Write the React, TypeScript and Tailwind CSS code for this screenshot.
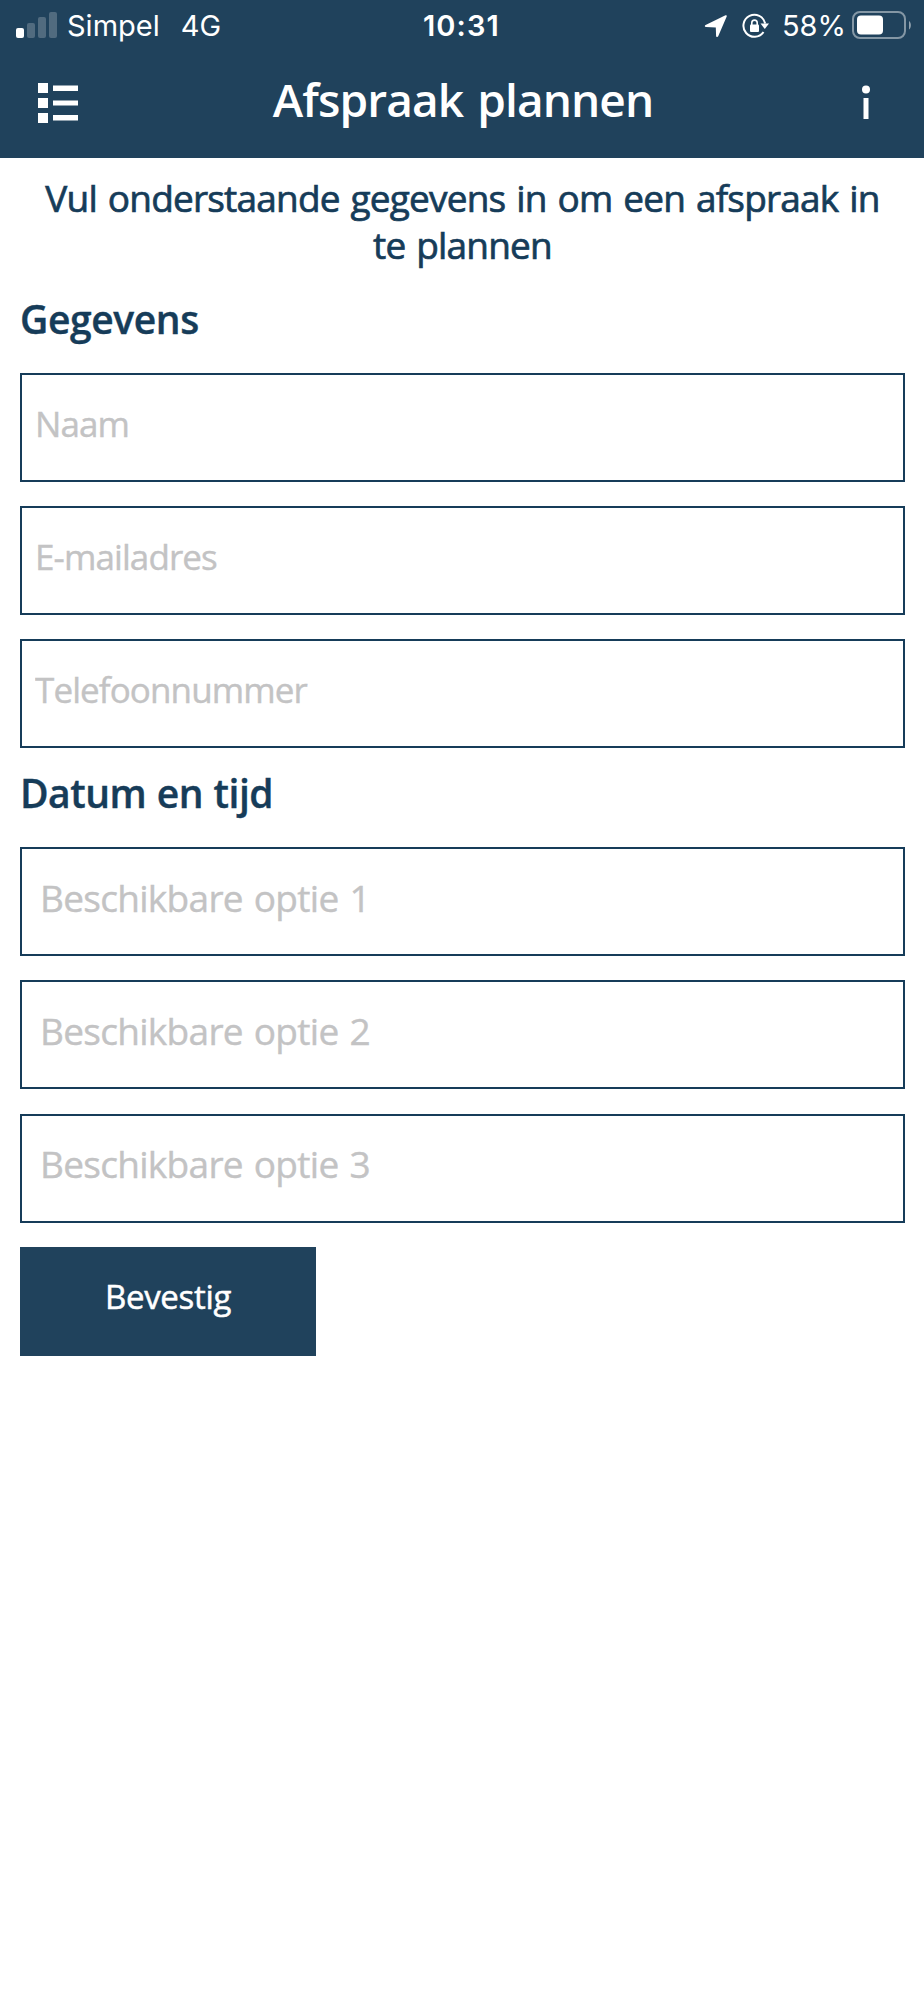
type FieldProps = {
    label: string;
    type: string;
};

type OptionProps = {
    label: string;
};

const StatusBar = () => {
    return (
        <div className="flex items-center h-[51px] pl-4 pr-[12px] font-['Inter',sans-serif] text-[29px] leading-[51px]">
            <div className="flex w-[407px] items-center">
                <svg width="42" height="28" viewBox="0 0 42 28" fill="white">
                    <rect x="0" y="16" width="8" height="10" rx="2" />
                    <rect x="11" y="11" width="8" height="15" rx="2" opacity="0.22" />
                    <rect x="22" y="5" width="8" height="21" rx="2" opacity="0.22" />
                    <rect x="33" y="0" width="8" height="26" rx="2" opacity="0.22" />
                </svg>
                <span className="ml-[9px]">Simpel</span>
                <span className="ml-[21px]">4G</span>
            </div>

            <span className="font-semibold tracking-[1.1px]">10:31</span>

            <div className="flex flex-1 items-center justify-end">
                <svg width="24" height="24" viewBox="0 0 24 24" fill="white">
                    <path d="M21.500 1.200c.9-.3 1.600.4 1.200 1.300L14.200 22.300c-.6 1.200-2 .9-2.100-.4l-.3-8.400-9.800-.4c-1.400-.1-1.600-1.500-.4-2z" />
                </svg>
                <svg className="ml-[14px]" width="28" height="26" viewBox="0 0 28 26" fill="none" stroke="white" strokeWidth="2">
                    <path d="M21.500 19A11 11 0 1 1 23.200 10.500" />
                    <path d="M18.500 10.500h8.500l-4.200 5.500z" fill="white" stroke="none" />
                    <rect x="8" y="11.500" width="9" height="7.500" rx="1" fill="white" stroke="none" />
                    <path d="M9.800 12V9.800a2.700 2.700 0 0 1 5.400 0V12" strokeWidth="1.600" />
                </svg>
                <span className="ml-3">58%</span>
                <svg className="ml-[6px]" width="60" height="30" viewBox="0 0 60 30" fill="none">
                    <rect x="1" y="1" width="52" height="26" rx="7" stroke="white" strokeOpacity="0.45" strokeWidth="2" />
                    <rect x="5" y="4.500" width="26" height="19" rx="4" fill="white" />
                    <path d="M57 10c2.500 1.500 2.500 7 0 8.500z" fill="white" fillOpacity="0.5" />
                </svg>
            </div>
        </div>
    );
};

const Header = () => {
    return (
        <header className="h-[158px] bg-[#20425c] text-white">
            <StatusBar />

            <div className="flex items-center justify-between h-[104px] pl-[38px] pr-[49px]">
                <svg width="40" height="41" viewBox="0 0 40 41" fill="white">
                    <path d="M0 0h10v10H0zM0 15h10v10H0zM0 30h10v10H0zM15 2.500h25v5.500H15zM15 17.500h25v5H15zM15 32h25v5.500H15z" />
                </svg>
                <h1 className="mr-[9px] pb-[9px] text-[46px] leading-[94px] font-semibold tracking-[-0.9px] [word-spacing:3px]">
                    Afspraak plannen
                </h1>
                <svg width="18" height="36" viewBox="0 0 18 36" fill="white">
                    <circle cx="9" cy="4.500" r="4" />
                    <rect x="6.500" y="13" width="5" height="21" />
                </svg>
            </div>
        </header>
    );
};

const Field = ({ label, type }: FieldProps) => {
    return (
        <input
            type={type}
            placeholder={label}
            className="block w-full h-[109px] pl-[13px] pb-[8px] border-2 border-[#163c59] bg-white text-[35px] tracking-[-0.9px] text-[#163c59] placeholder:text-[#c3c3c4] placeholder:opacity-100 outline-none [-webkit-text-stroke:0.4px]"
        />
    );
};

const Option = ({ label }: OptionProps) => {
    return (
        <button
            type="button"
            className="block w-full h-[109px] pl-[18px] pb-[8px] border-2 border-[#163c59] bg-white text-left text-[37px] tracking-[-0.7px] [word-spacing:2px] text-[#c3c3c4] [-webkit-text-stroke:0.4px]"
        >
            {label}
        </button>
    );
};

const App = () => {
    return (
        <div className="w-full min-h-[2000px] bg-white font-['Open_Sans',sans-serif] text-[#163c59]">
            <Header />

            <main className="pl-5 pr-[19px] pt-4">
                <p className="text-center text-[37px] leading-[47px] tracking-[-0.8px] [word-spacing:2px] [-webkit-text-stroke:0.7px]">
                    Vul onderstaande gegevens in om een afspraak in
                    <br />
                    te plannen
                </p>

                <h2 className="mt-[28px] h-[76.500px] text-[39px] leading-[46px] font-semibold tracking-[-0.4px] [-webkit-text-stroke:0.4px]">
                    Gegevens
                </h2>
                <div className="flex flex-col gap-[24.300px]">
                    <Field label="Naam" type="text" />
                    <Field label="E-mailadres" type="email" />
                    <Field label="Telefoonnummer" type="tel" />
                </div>

                <h2 className="mt-[22px] h-[77.200px] text-[39px] leading-[46px] font-semibold tracking-[-0.5px] [word-spacing:1px] [-webkit-text-stroke:0.4px]">
                    Datum en tijd
                </h2>
                <div className="flex flex-col gap-[24.200px]">
                    <Option label="Beschikbare optie 1" />
                    <Option label="Beschikbare optie 2" />
                    <Option label="Beschikbare optie 3" />
                </div>

                <button
                    type="submit"
                    className="block mt-6 w-[296px] h-[109px] pb-[9px] bg-[#20425c] text-[33px] tracking-[-0.3px] text-white [-webkit-text-stroke:0.5px]"
                >
                    Bevestig
                </button>
            </main>
        </div>
    );
};

export default App;
